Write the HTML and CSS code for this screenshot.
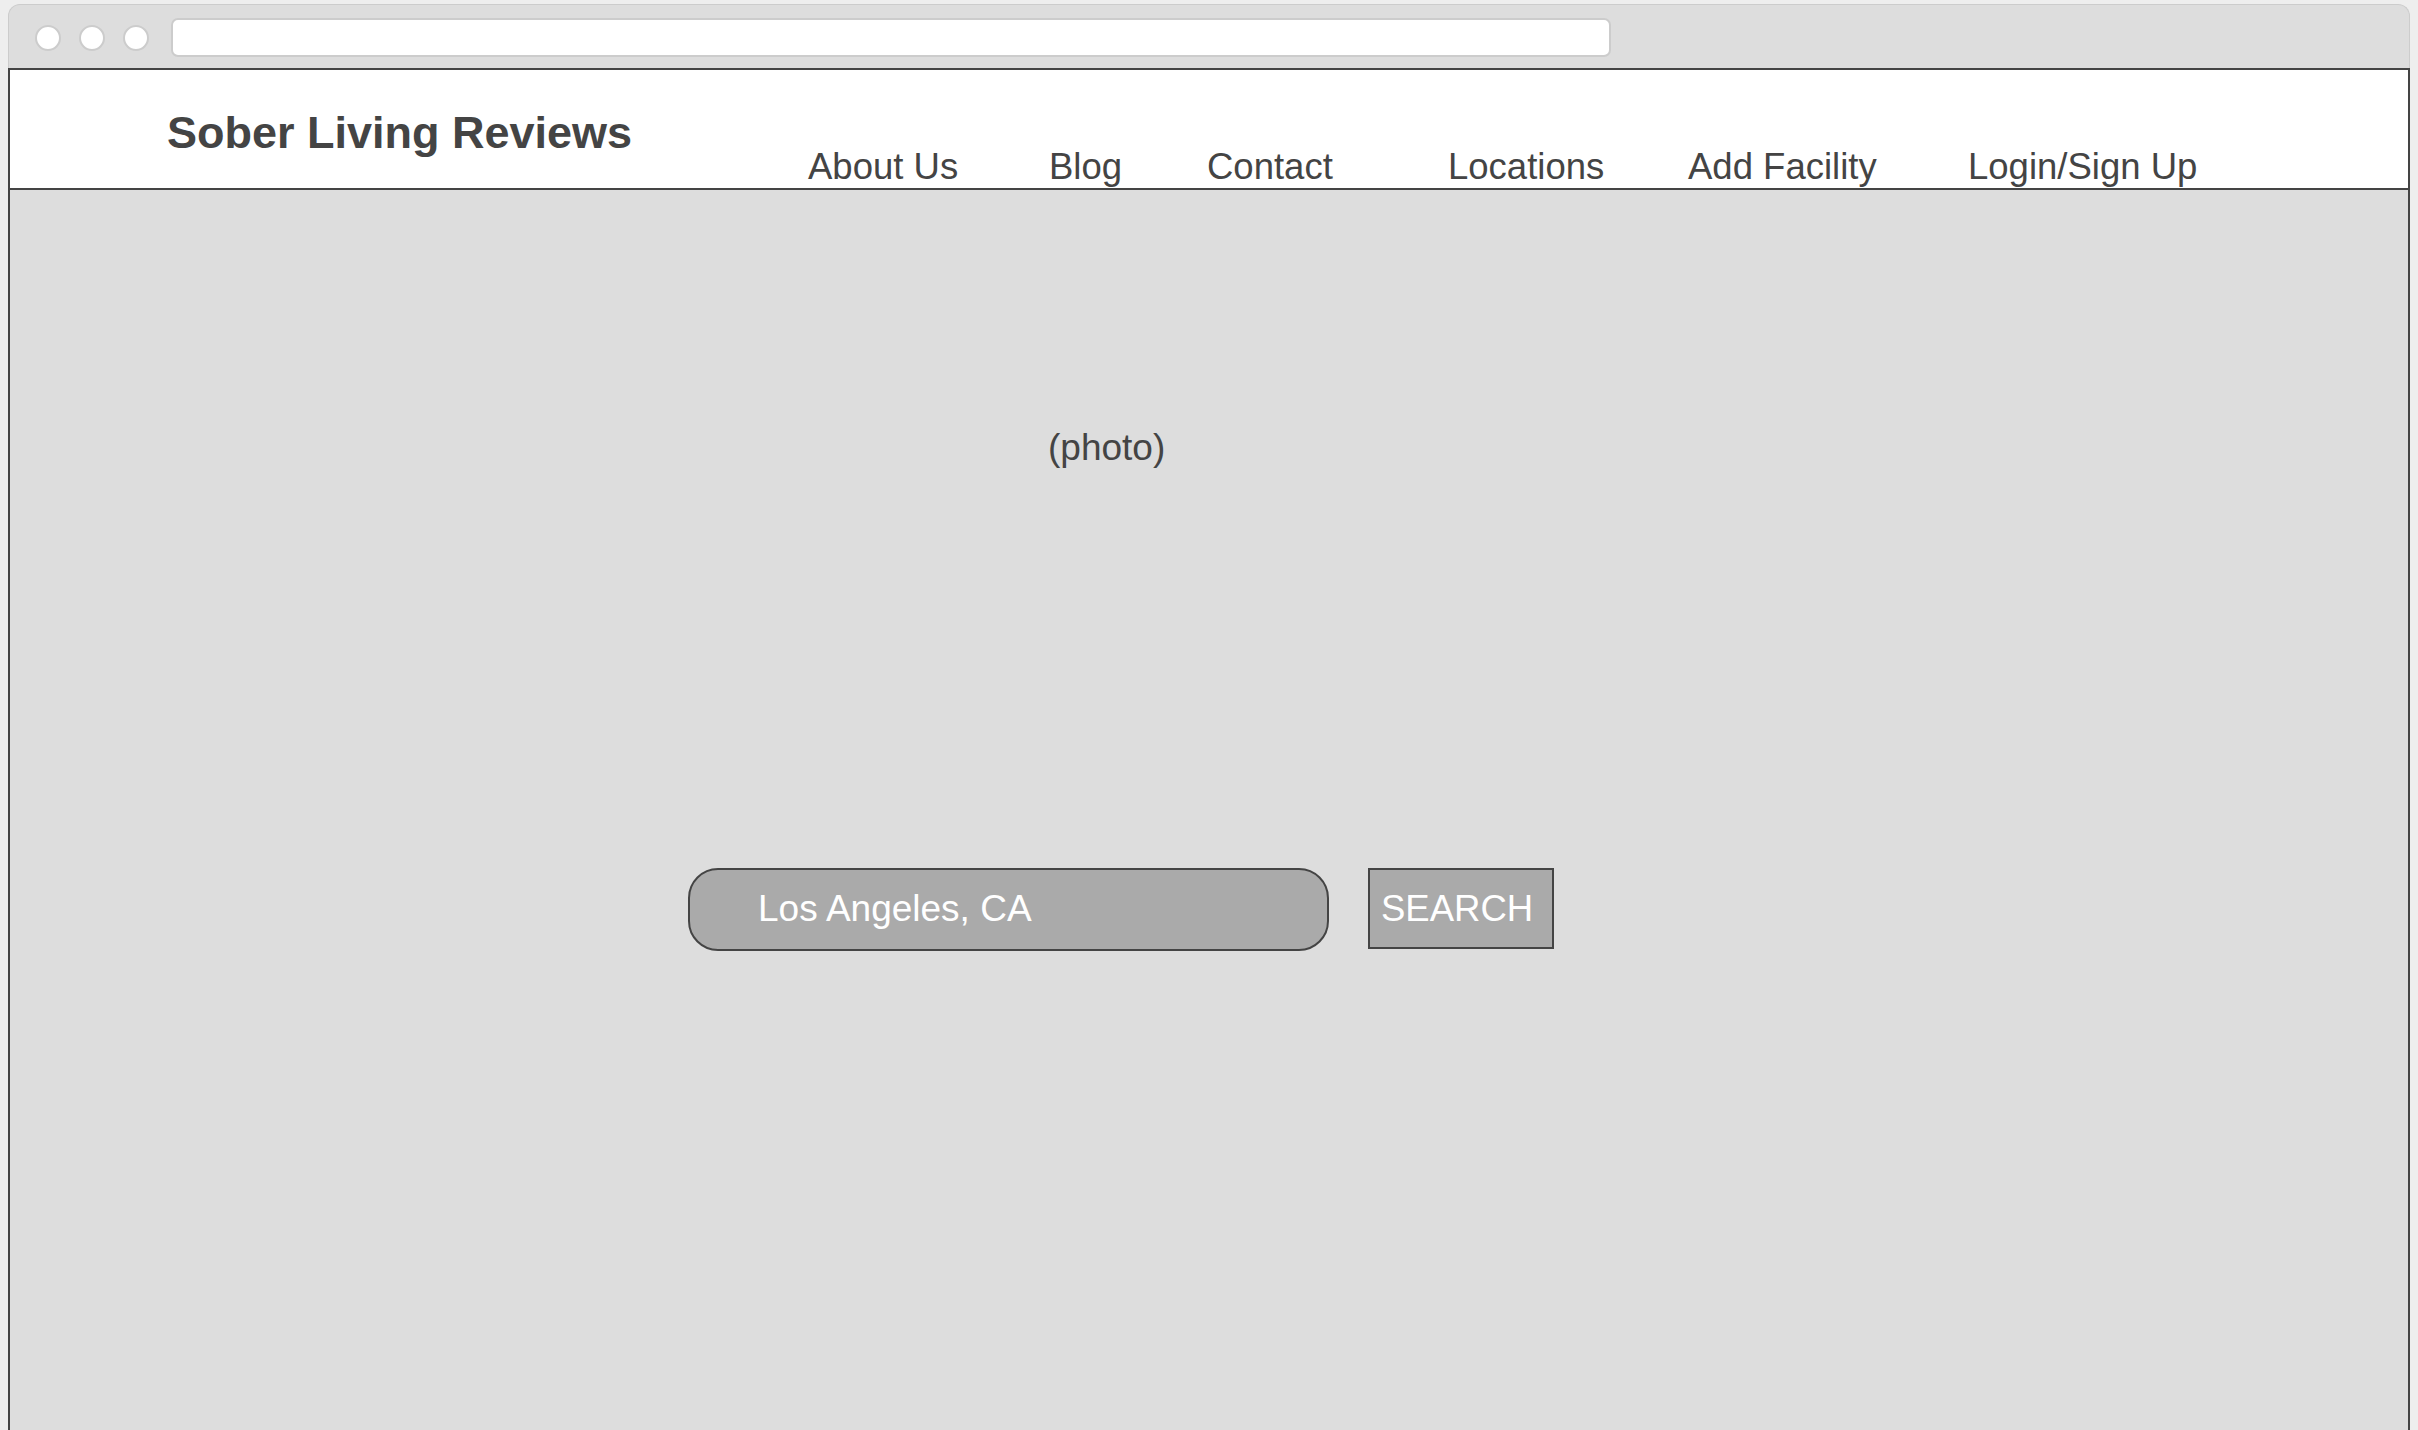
FILE: index.html
```html
<!DOCTYPE html>
<html lang="en">
<head>
<meta charset="utf-8">
<title>Sober Living Reviews</title>
<link rel="stylesheet" href="styles.css">
</head>
<body>
<div class="window">
  <div class="chrome">
    <div class="dots">
      <span class="dot"></span>
      <span class="dot"></span>
      <span class="dot"></span>
    </div>
    <div class="address"></div>
  </div>
  <div class="viewport">
    <header class="site-header">
      <div class="logo">Sober Living Reviews</div>
      <nav class="nav">
        <a href="#">About Us</a>
        <a href="#">Blog</a>
        <a href="#">Contact</a>
        <a href="#">Locations</a>
        <a href="#">Add Facility</a>
        <a href="#">Login/Sign Up</a>
      </nav>
    </header>
    <main class="hero">
      <div class="photo">(photo)</div>
      <form class="search">
        <div class="search-input">Los Angeles, CA</div>
        <button type="button" class="search-btn">SEARCH</button>
      </form>
    </main>
  </div>
</div>
</body>
</html>
```
FILE: styles.css
```css
html, body {
  margin: 0;
  height: 100%;
}
body {
  background: #eeeeee;
  font-family: "Liberation Sans", Arial, sans-serif;
  color: #444444;
  overflow: hidden;
}
.window {
  margin: 4px 8px 0 8px;
  height: 1426px;
  display: flex;
  flex-direction: column;
}
.chrome {
  box-sizing: border-box;
  height: 64px;
  flex: none;
  background: #dddddd;
  border: 1px solid #cccccc;
  border-bottom: none;
  border-radius: 12px 12px 0 0;
  display: flex;
  align-items: center;
  padding: 2px 0 0 26px;
}
.dots {
  display: flex;
  gap: 18px;
  margin-right: 22px;
}
.dot {
  box-sizing: border-box;
  width: 26px;
  height: 26px;
  border-radius: 50%;
  background: #ffffff;
  border: 2px solid #cccccc;
}
.address {
  box-sizing: border-box;
  width: 1440px;
  height: 39px;
  background: #ffffff;
  border: 2px solid #cccccc;
  border-radius: 7px;
}
.viewport {
  flex: 1;
  background: #dddddd;
  border: 2px solid #444444;
  border-bottom: none;
}
.site-header {
  height: 118px;
  background: #ffffff;
  border-bottom: 2px solid #444444;
  display: flex;
  align-items: flex-start;
  padding-left: 157px;
}
.logo {
  width: 641px;
  flex: none;
  font-size: 45px;
  font-weight: bold;
  line-height: 45px;
  margin-top: 40px;
  white-space: nowrap;
}
.nav {
  display: grid;
  grid-template-columns: 241px 158px 241px 240px 280px auto;
  margin-top: 79px;
}
.nav a {
  font-size: 36.5px;
  line-height: 36px;
  color: #444444;
  text-decoration: none;
  white-space: nowrap;
}
.hero {
  padding-top: 240px;
}
.photo {
  margin-left: 1038px;
  font-size: 37px;
  line-height: 36px;
}
.search {
  display: flex;
  align-items: flex-start;
  gap: 39px;
  margin: 402px 0 0 678px;
}
.search-input {
  box-sizing: border-box;
  width: 641px;
  height: 83px;
  border: 2px solid #444444;
  border-radius: 30px;
  background: #aaaaaa;
  color: #ffffff;
  font-size: 37px;
  padding-left: 68px;
  padding-bottom: 2px;
  display: flex;
  align-items: center;
}
.search-btn {
  box-sizing: border-box;
  width: 186px;
  height: 81px;
  margin: 0;
  border: 2px solid #444444;
  border-radius: 0;
  background: #aaaaaa;
  color: #ffffff;
  font-family: "Liberation Sans", Arial, sans-serif;
  font-size: 36.5px;
  padding: 0 0 0 11px;
  text-align: left;
}
```
